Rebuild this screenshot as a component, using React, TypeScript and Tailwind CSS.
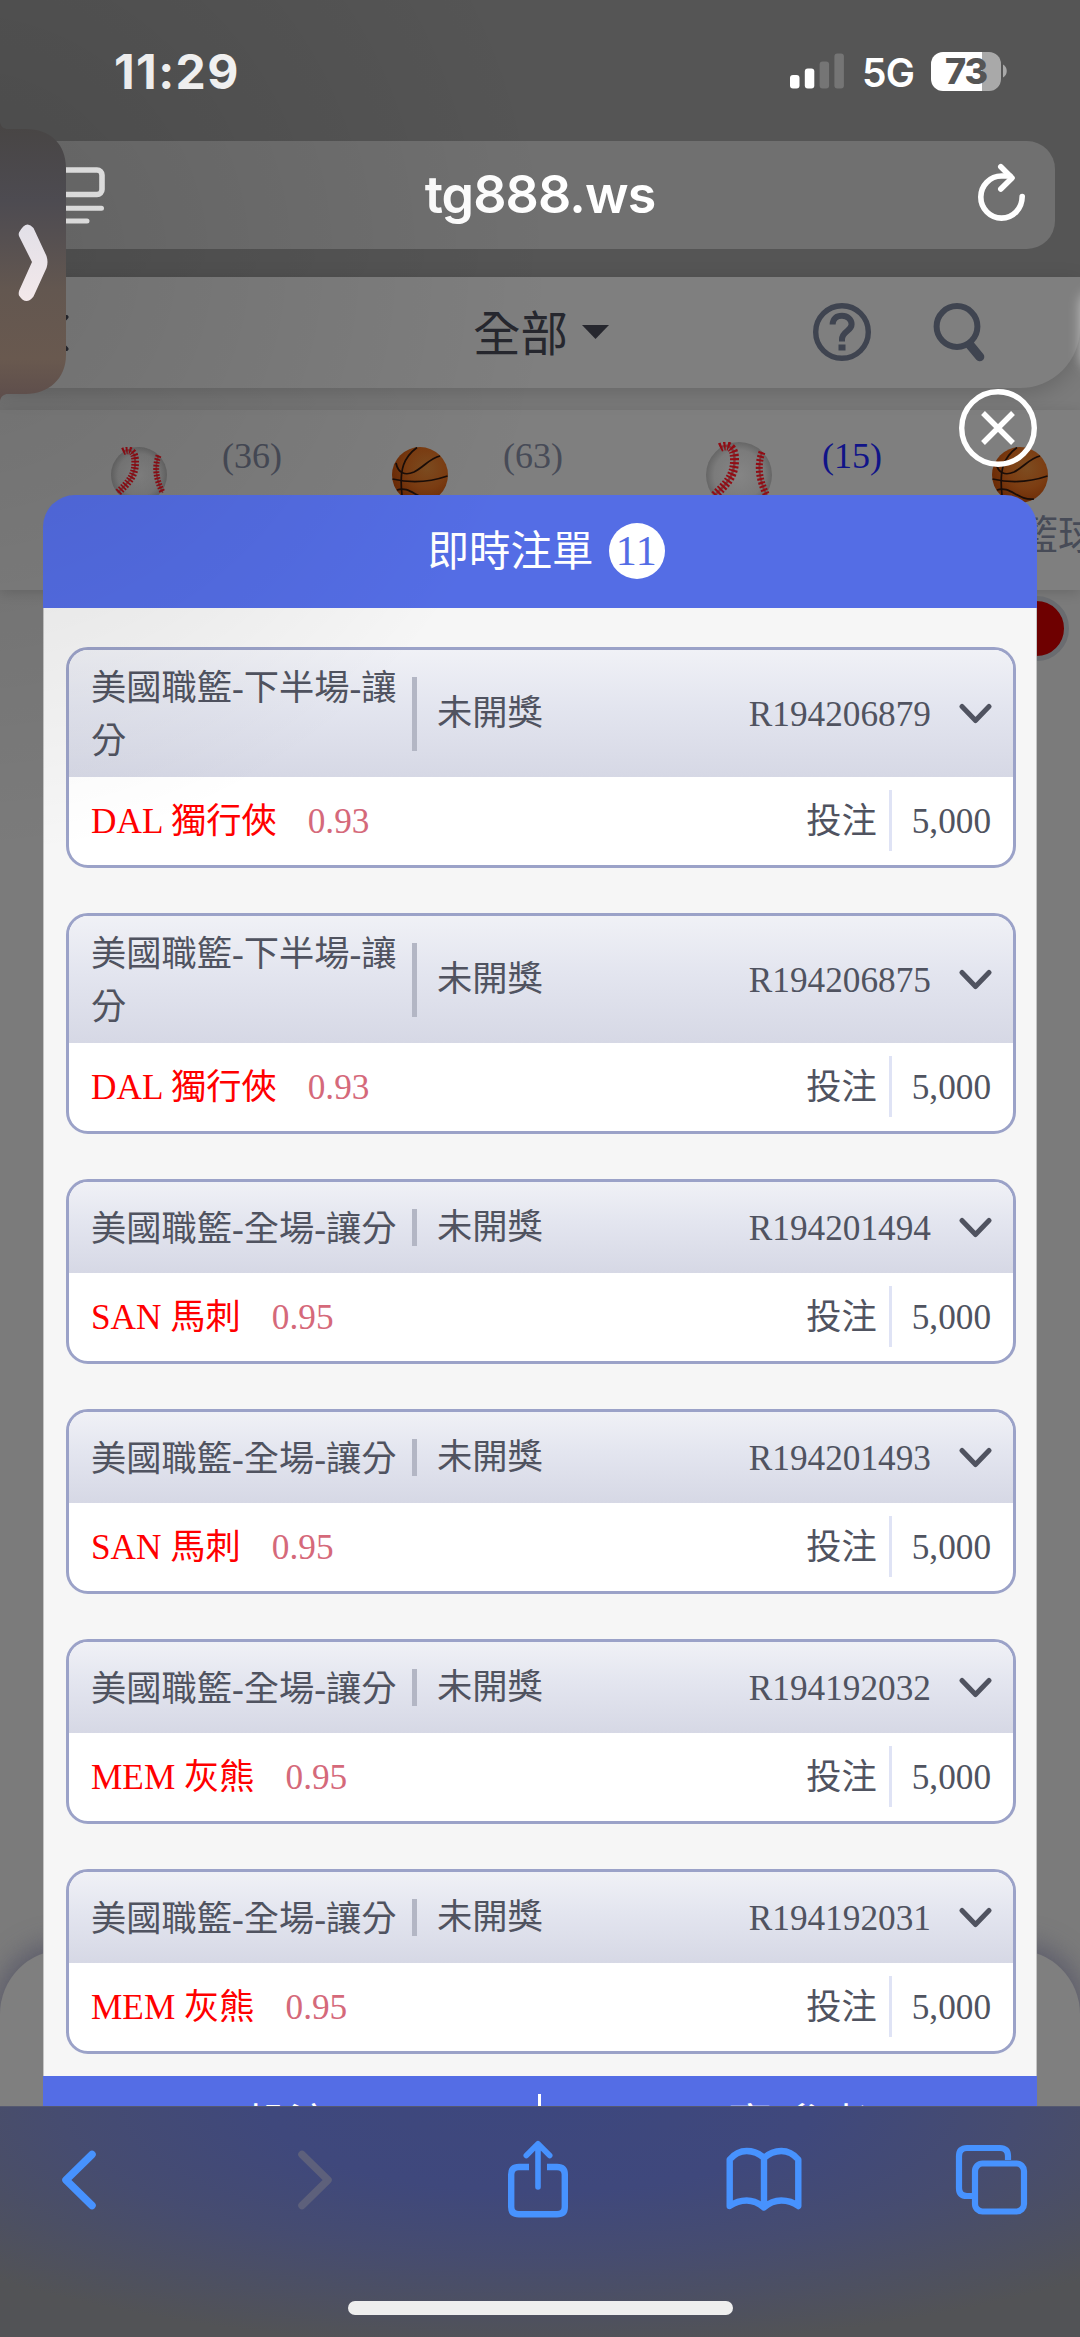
import React from 'react';

type Bet = {
  id: string;
  title: string;
  team: string;
  odds: string;
  stake: string;
  tall?: boolean;
};

const BETS: Bet[] = [
  { id: 'R194206879', title: '美國職籃-下半場-讓分', team: 'DAL 獨行俠', odds: '0.93', stake: '5,000', tall: true },
  { id: 'R194206875', title: '美國職籃-下半場-讓分', team: 'DAL 獨行俠', odds: '0.93', stake: '5,000', tall: true },
  { id: 'R194201494', title: '美國職籃-全場-讓分', team: 'SAN 馬刺', odds: '0.95', stake: '5,000' },
  { id: 'R194201493', title: '美國職籃-全場-讓分', team: 'SAN 馬刺', odds: '0.95', stake: '5,000' },
  { id: 'R194192032', title: '美國職籃-全場-讓分', team: 'MEM 灰熊', odds: '0.95', stake: '5,000' },
  { id: 'R194192031', title: '美國職籃-全場-讓分', team: 'MEM 灰熊', odds: '0.95', stake: '5,000' },
];

export default function App() {
  return (
    <div className="relative flex h-[2337px] w-[1080px] flex-col overflow-hidden bg-[#7b7b7b] font-['Liberation_Serif','Noto_Sans_CJK_TC',serif] whitespace-nowrap">
      <BrowserTop />
      <SitePage />
      {/* the floating tab on the left throws a soft shade over the corner */}
      <div className="pointer-events-none absolute inset-0 z-20 bg-[radial-gradient(circle_600px_at_-40px_260px,rgba(0,0,0,0.13),rgba(0,0,0,0)_100%)]" />
      <SideTab />
      <BetDialog />
      <BrowserBottom />
    </div>
  );
}

function BrowserTop() {
  return (
    <div className="flex h-[277px] shrink-0 flex-col bg-[#555] font-['Inter',sans-serif] text-white">
      <div className="flex h-[141px] items-center pl-[114px] pr-[73px]">
        <span className="mt-[3px] text-[48px] font-bold leading-none tracking-[1.4px]">11:29</span>
        <div className="ml-auto mt-[1px] flex items-center">
          <svg width="54" height="36" viewBox="0 0 54 36">
            <rect x="0" y="22" width="9.5" height="13.5" rx="3" fill="#fff" />
            <rect x="14.8" y="15.5" width="9.5" height="20" rx="3" fill="#fff" />
            <rect x="29.6" y="8.5" width="9.5" height="27" rx="3" fill="#757575" />
            <rect x="44.4" y="0.5" width="9.5" height="35" rx="3" fill="#757575" />
          </svg>
          <span className="ml-[18px] mt-[2px] w-[51px] text-[39px] font-semibold leading-none tracking-[-0.8px]">5G</span>
          <div className="ml-[18px] flex h-[39px] w-[70px] items-center justify-center rounded-[12px] bg-[linear-gradient(90deg,#fff_73%,#a9a9a9_73%)] text-[36px] font-extrabold leading-none tracking-[-1px] text-[#555]">
            73
          </div>
          <svg className="ml-[2px]" width="4" height="14" viewBox="0 0 4 14">
            <path d="M0 0.5C5 3 5 11 0 13.5Z" fill="#a9a9a9" />
          </svg>
        </div>
      </div>
      <div className="relative mx-[25px] flex h-[108px] items-center justify-center rounded-[28px] bg-[#707070]">
        <svg className="absolute left-[24px] top-[25px]" width="60" height="60" viewBox="0 0 60 60" fill="none" stroke="#f2f2f2" strokeLinecap="round">
          <rect x="3" y="4" width="50" height="24.5" rx="5" strokeWidth="5.6" />
          <path d="M3 42.2H52.5M3 55H38" strokeWidth="5" />
        </svg>
        <span className="text-[52px] font-semibold leading-none tracking-[-0.9px]">tg888.ws</span>
        <svg className="absolute right-[27px] top-[22px]" width="52" height="60" viewBox="0 0 52 60" fill="none" stroke="#fff" strokeWidth="5.6" strokeLinecap="round" strokeLinejoin="round">
          <path d="M46.2 33.5C46 46 37 55.1 25.5 55.1S4.8 45.5 4.8 34 14 13 25.5 13H34" />
          <path d="M24.8 3.8L36 14.9 24.8 26" />
        </svg>
      </div>
    </div>
  );
}

function SitePage() {
  return (
    <div className="flex flex-1 flex-col bg-[#7b7b7b]">
      <div className="relative z-10 flex h-[111px] shrink-0 items-center rounded-br-[60px] bg-[#7f7f7f] shadow-[0_6px_22px_rgba(0,0,0,0.16)]">
        <div className="flex w-full items-center pl-[34px]">
          <svg width="36" height="36" viewBox="0 0 36 36" fill="none" stroke="#26272e" strokeWidth="4" strokeLinecap="round">
            <path d="M2 2L32.5 34M32.5 2L2 34" />
          </svg>
          <span className="ml-[403px] -mt-[3px] text-[47.5px] leading-none text-[#26272e] font-['Noto_Sans_CJK_TC',sans-serif]">全部</span>
          <svg className="ml-[14px] -mt-[2px]" width="27" height="14" viewBox="0 0 27 14">
            <path d="M0 0H27L13.5 14Z" fill="#26272e" />
          </svg>
          <svg className="ml-[204px] -mt-[2px]" width="58" height="60" viewBox="0 0 58 60" fill="none" stroke="#3f4450">
            <circle cx="29" cy="30" r="26.3" strokeWidth="5.4" />
            <path d="M19.6 22.5C19.8 16.5 23.5 13.8 29 13.8S38.6 17.4 38.6 22.3C38.6 29.5 29 29 29 37.5V39.5" strokeWidth="6" />
            <rect x="25.5" y="42.5" width="7" height="6" fill="#3f4450" stroke="none" />
          </svg>
          <svg className="ml-[62px] -mt-[2px]" width="54" height="60" viewBox="0 0 54 60" fill="none" stroke="#3f4450" strokeLinecap="round">
            <circle cx="24" cy="24.5" r="20.4" strokeWidth="6" />
            <path d="M37 43L46.8 54.8" strokeWidth="9" />
          </svg>
        </div>
        <div className="absolute right-[-14px] top-[16px] h-[74px] w-[12px] rounded-l-full shadow-[0_0_12px_2px_rgba(255,255,255,0.5)]" />
      </div>
      <div className="mt-[22px] flex h-[180px] shrink-0 bg-[#7f7f7f] pl-[106px] text-[36px] leading-none text-[#474b57] shadow-[0_3px_12px_rgba(0,0,0,0.14)]">
        <Sport width="w-[281px]" count="(36)"><Baseball size={56} /></Sport>
        <Sport width="w-[319px]" count="(63)"><Basketball /></Sport>
        <Sport width="w-[281px]" count="(15)" active><Baseball size={66} /></Sport>
        <div className="flex w-[90px] shrink-0 flex-col items-start pt-[32px]">
          <div className="flex h-[66px] w-[66px] items-center justify-center"><Basketball /></div>
          <span className="ml-[31px] mt-[4px] text-[40px] leading-none font-['Noto_Sans_CJK_TC',sans-serif]">籃球</span>
        </div>
      </div>
      <div className="ml-auto mr-[11px] mt-[6px] h-[65px] w-[65px] shrink-0 rounded-full border-[5px] border-[#6a6c70] bg-[#6e0000]" />
      <div className="mt-auto h-[387px] w-full shrink-0 rounded-t-[64px] bg-[#7f7f7f] shadow-[0_-2px_24px_6px_rgba(70,70,95,0.55)]" />
    </div>
  );
}

function Sport({ width, count, active, children }: { width: string; count: string; active?: boolean; children: React.ReactNode }) {
  return (
    <div className={`flex shrink-0 items-start ${width}`}>
      <div className="mt-[32px] flex h-[66px] w-[66px] items-center justify-center">{children}</div>
      <span className={`ml-[50px] mt-[28px] ${active ? 'text-[#101488]' : ''}`}>{count}</span>
    </div>
  );
}

function Baseball({ size }: { size: number }) {
  return (
    <svg width={size} height={size} viewBox="0 0 66 66" fill="none">
      <defs>
        <radialGradient id="ballShade" cx="0.5" cy="0.5" r="0.5">
          <stop offset="0" stopColor="#858585" />
          <stop offset="0.75" stopColor="#7b7b7b" />
          <stop offset="1" stopColor="#666" />
        </radialGradient>
      </defs>
      <circle cx="33" cy="33" r="33" fill="url(#ballShade)" />
      <path d="M14 5.5C22 1.5 28.5 5 28.5 17C29 35 19 43 8 54" stroke="#7a3c40" strokeWidth="2.4" />
      <path d="M14 5.5C22 1.5 28.5 5 28.5 17C29 35 19 43 8 54" stroke="#920c14" strokeWidth="9" strokeDasharray="2 1.8" />
      <path d="M56 10C51 24 53 38 61 54" stroke="#7a3c40" strokeWidth="2" />
      <path d="M56 10C51 24 53 38 61 54" stroke="#920c14" strokeWidth="7" strokeDasharray="2 1.8" />
    </svg>
  );
}

function Basketball() {
  return (
    <svg width="56" height="56" viewBox="0 0 56 56" fill="none">
      <defs>
        <radialGradient id="hoopShade" cx="0.62" cy="0.38" r="0.65">
          <stop offset="0" stopColor="#7d4c20" />
          <stop offset="0.55" stopColor="#7c3d12" />
          <stop offset="1" stopColor="#6b2a05" />
        </radialGradient>
      </defs>
      <circle cx="28" cy="28" r="28" fill="url(#hoopShade)" />
      <g stroke="#1a0d08" strokeWidth="1.7">
        <path d="M0.5 32C18 36 38 35 55.5 29" />
        <path d="M25 0.5C12 10 7 22 10 48" />
        <path d="M4 16C6 26 13 29 22 25C32 20 38 11 48 9" />
        <path d="M5 43C18 38 26 54 42 52" />
      </g>
    </svg>
  );
}

function SideTab() {
  return (
    <svg className="absolute left-0 top-[122px] z-30" width="68" height="280" viewBox="0 0 68 280" fill="none">
      <defs>
        <linearGradient id="tabFill" x1="0" y1="0" x2="0" y2="1">
          <stop offset="0" stopColor="#484544" />
          <stop offset="0.28" stopColor="#4d4b51" />
          <stop offset="0.42" stopColor="#565051" />
          <stop offset="0.6" stopColor="#635750" />
          <stop offset="0.85" stopColor="#69594f" />
          <stop offset="1" stopColor="#5d4d4b" />
        </linearGradient>
        <linearGradient id="tabArrow" x1="0" y1="0" x2="0" y2="1">
          <stop offset="0" stopColor="#e2e0e8" />
          <stop offset="1" stopColor="#f3e8ea" />
        </linearGradient>
      </defs>
      <path d="M0 0C1 5 4 7 8 7H26C50 7 66 22 66 46V233C66 257 48 272 26 272H8C4 272 1 274 0 279Z" fill="url(#tabFill)" />
      <path d="M19 110.5Q26.2 97 33.5 106L46.5 134Q48.5 140 46.5 146L33.5 174.5Q26 184 19 173.5Q18.3 171.5 19.2 168.5L32 140L19.2 114.5Q18.3 112.5 19 110.5Z" fill="url(#tabArrow)" />
    </svg>
  );
}

function BetDialog() {
  return (
    <div className="absolute left-[43px] top-[389px] z-10 flex w-[994px] flex-col">
      <svg className="ml-auto shrink-0" width="78" height="78" viewBox="0 0 78 78" fill="none" stroke="#fff" strokeWidth="5.4">
        <circle cx="39" cy="39" r="36.3" />
        <path d="M24 24L54 54M54 24L24 54" />
      </svg>
      <div className="mt-[28px] flex h-[113px] items-center justify-center rounded-t-[32px] bg-[#546de5]">
        <span className="ml-[12px] mt-[3px] text-[41.5px] leading-none text-white">即時注單</span>
        <span className="ml-[15px] flex h-[56px] w-[56px] -mt-[2px] items-center justify-center rounded-full bg-white text-[42px] leading-none tracking-[0.5px] text-[#546de5]">
          11
        </span>
      </div>
      <div className="flex h-[1467.5px] flex-col gap-[45.5px] border-x border-x-[#c5c5c5] bg-[#f6f6f6] pl-[22px] pr-[20px] pt-[39px]">
        {BETS.map((bet) => (
          <BetCard key={bet.id} bet={bet} />
        ))}
      </div>
      <div className="flex h-[100px] bg-[#546de5] text-[42px] leading-none text-white">
        <div className="flex w-[495px] justify-center pr-[4px] pt-[28px]">投注</div>
        <div className="mt-[18px] h-[60px] w-[3px] bg-white" />
        <div className="flex flex-1 justify-center pr-[8px] pt-[28px]">可贏(參考)</div>
      </div>
    </div>
  );
}

function BetCard({ bet }: { bet: Bet }) {
  return (
    <div className={`flex shrink-0 flex-col overflow-hidden rounded-[22px] border-[3px] border-[#9ba2c8] bg-white text-[35.25px] leading-[53px] text-[#505360] ${bet.tall ? 'h-[220.5px]' : 'h-[184.5px]'}`}>
      <div className={`flex shrink-0 items-center bg-[linear-gradient(180deg,#f0f1f6,#e3e5ef_45%,#d6d8e5)] pl-[22px] pr-[21px] ${bet.tall ? 'h-[127px]' : 'h-[91px]'}`}>
        <div className="w-[308px] pt-[3px] whitespace-normal break-all">{bet.title}</div>
        <div className={`ml-[13px] w-[5px] bg-[#b3b6c4] ${bet.tall ? 'h-[74px]' : 'h-[37px]'}`} />
        <span className="ml-[20px]">未開獎</span>
        <span className="ml-auto pt-[2px]">{bet.id}</span>
        <svg className="ml-[28px]" width="33" height="22" viewBox="0 0 33 22" fill="none" stroke="#505360" strokeWidth="5" strokeLinecap="round" strokeLinejoin="round">
          <path d="M3 3.5L16.5 17.5L30 3.5" />
        </svg>
      </div>
      <div className="flex flex-1 items-center pl-[22px] pr-[22px]">
        <span className="pt-[2px] text-[#ff0000]">{bet.team}</span>
        <span className="ml-[31px] pt-[2px] text-[#d5697a]">{bet.odds}</span>
        <span className="ml-auto pt-[2px]">投注</span>
        <div className="ml-[12px] h-[61px] w-[3px] bg-[#dfe3f5]" />
        <span className="ml-[20px] pt-[2px]">{bet.stake}</span>
      </div>
    </div>
  );
}

function BrowserBottom() {
  return (
    <div className="absolute bottom-0 left-0 z-30 flex h-[231px] w-full flex-col items-center border-t border-t-[#555970] bg-[#525356] bg-[radial-gradient(ellipse_72%_105%_at_50%_0%,#3d477e_0%,#3f487c_35%,#464c70_62%,rgba(82,83,86,0)_100%)]">
      <div className="flex h-[145px] w-full items-center pl-[60px] pr-[52px]">
        <svg width="38" height="64" viewBox="0 0 38 64" fill="none" stroke="#4792fe" strokeWidth="7.5" strokeLinecap="round" strokeLinejoin="round">
          <path d="M32 6.5L6 32L32 57.5" />
        </svg>
        <svg className="ml-[198px]" width="38" height="64" viewBox="0 0 38 64" fill="none" stroke="#5d607b" strokeWidth="7.5" strokeLinecap="round" strokeLinejoin="round">
          <path d="M6 6.5L32 32L6 57.5" />
        </svg>
        <svg className="-mt-[2px] ml-[172px]" width="64" height="78" viewBox="0 0 64 78" fill="none" stroke="#4792fe" strokeWidth="6.4">
          <path d="M23 27H13Q5.2 27 5.2 34.5V67Q5.2 74.3 13 74.3H51Q58.8 74.3 58.8 67V34.5Q58.8 27 51 27H41" />
          <path d="M32 47V5M20.3 15.5L32 3.8L43.7 15.5" strokeWidth="5.6" strokeLinecap="round" strokeLinejoin="round" />
        </svg>
        <svg className="ml-[156px]" width="76" height="66" viewBox="0 0 76 66" fill="none" stroke="#4792fe" strokeWidth="6.4" strokeLinejoin="round" strokeLinecap="round">
          <path d="M38 11Q30.5 4 20.7 4T3.7 12.5V59Q11.5 53.5 20.7 53.5T38 60.5Q45.5 53.5 55.3 53.5T72.3 59V12.5Q65 4 55.3 4T38 11V60" />
        </svg>
        <svg className="ml-auto" width="73" height="72" viewBox="0 0 73 72" fill="none" stroke="#4792fe" strokeWidth="6.2">
          <path d="M53 16V12Q53 4 45 4H12Q4 4 4 12V44Q4 52 12 52H17" />
          <rect x="20" y="19.5" width="49" height="48" rx="7.5" />
        </svg>
      </div>
      <div className="mt-[49px] h-[14px] w-[385px] rounded-full bg-[#eee]" />
    </div>
  );
}
